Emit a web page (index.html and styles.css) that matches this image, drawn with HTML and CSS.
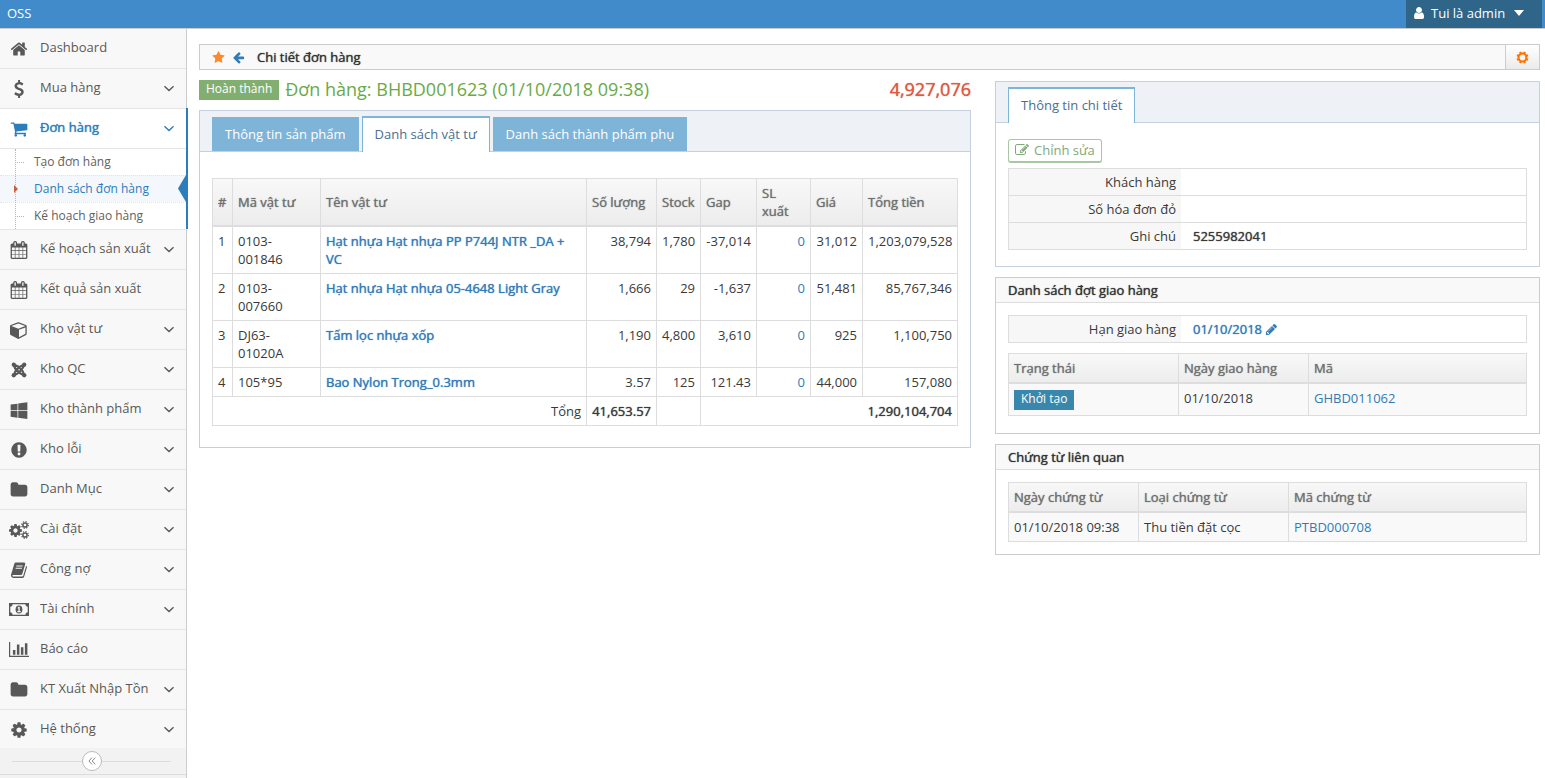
FILE: index.html
```html
<!DOCTYPE html>
<html lang="vi">
<head>
<meta charset="utf-8">
<title>OSS - Chi tiết đơn hàng</title>
<link rel="stylesheet" href="styles.css">
</head>
<body>
<svg class="sprite" aria-hidden="true">
  <symbol id="i-home" viewBox="0 0 1792 1792"><path d="M1472 992v480q0 26-19 45t-45 19h-384v-384h-256v384h-384q-26 0-45-19t-19-45v-480q0-1 .5-3t.5-3l575-474 575 474q1 2 1 6zm223-69l-62 74q-8 9-21 11h-3q-13 0-21-7l-692-577-692 577q-12 8-24 7-13-2-21-11l-62-74q-8-10-7-23.500t11-21.500l719-599q32-26 76-26t76 26l244 204v-195q0-14 9-23t23-9h192q14 0 23 9t9 23v408l219 182q10 8 11 21.500t-7 23.500z"/></symbol>
  <symbol id="i-usd" viewBox="0 0 1792 1792"><path d="M1362 1185q0 153-99.500 263.500t-258.500 136.500v175q0 14-9 23t-23 9h-135q-13 0-22.500-9.500t-9.500-22.500v-175q-66-9-127.500-31t-101.500-44.500-74-48-46.500-37.500-17.500-18q-17-21-2-41l103-135q7-10 23-12 15-2 24 9l2 2q113 99 243 125 37 8 74 8 81 0 142.500-43t61.500-122q0-28-15-53t-33.500-42-58.500-37.500-66-32-80-32.500q-39-16-61.500-25t-61.500-26.500-62.500-31-56.500-35.500-53.500-42.500-43.500-49-35.500-58-21-66.500-8.500-78q0-138 98-242t255-134v-180q0-13 9.500-22.500t22.500-9.500h135q14 0 23 9t9 23v176q57 6 110.500 23t87 33.500 63.500 37.500 39 29 15 14q17 18 5 38l-81 146q-8 15-23 16-14 3-27-7-3-3-14.500-12t-39-26.500-58.500-32-74.500-26-85.500-11.500q-95 0-155 43t-60 111q0 26 8.500 48t29.500 41.500 39.500 33 56 31 60.500 27 70 27.500q53 20 81 31.500t76 35 75.500 42.500 62 50 53 63.500 31.500 76.500 13 94z"/></symbol>
  <symbol id="i-cart" viewBox="0 0 1792 1792"><path d="M704 1536q0 52-38 90t-90 38-90-38-38-90 38-90 90-38 90 38 38 90zm896 0q0 52-38 90t-90 38-90-38-38-90 38-90 90-38 90 38 38 90zm128-1088v512q0 24-16.500 42.500t-40.500 21.500l-1044 122q13 60 13 70 0 16-24 64h920q26 0 45 19t19 45-19 45-45 19h-1024q-26 0-45-19t-19-45q0-11 8-31.500t16-36 21.500-40 15.500-29.500l-177-823h-204q-26 0-45-19t-19-45 19-45 45-19h256q16 0 28.500 6.500t19.500 15.500 13 24.500 8 26 5.500 29.500 4.500 26h1201q26 0 45 19t19 45z"/></symbol>
  <symbol id="i-calendar" viewBox="0 0 1792 1792"><path d="M192 1664h288v-288h-288v288zm352 0h320v-288h-320v288zm-352-352h288v-320h-288v320zm352 0h320v-320h-320v320zm-352-384h288v-288h-288v288zm736 736h320v-288h-320v288zm-384-736h320v-288h-320v288zm768 736h288v-288h-288v288zm-384-352h320v-320h-320v320zm-352-864v-288q0-13-9.500-22.500t-22.500-9.500h-64q-13 0-22.500 9.500t-9.500 22.500v288q0 13 9.500 22.500t22.500 9.500h64q13 0 22.500-9.500t9.500-22.500zm736 864h288v-320h-288v320zm-384-384h320v-288h-320v288zm384 0h288v-288h-288v288zm32-480v-288q0-13-9.500-22.500t-22.500-9.500h-64q-13 0-22.500 9.500t-9.500 22.500v288q0 13 9.500 22.500t22.500 9.500h64q13 0 22.500-9.500t9.500-22.500zm384-64v1280q0 52-38 90t-90 38h-1408q-52 0-90-38t-38-90v-1280q0-52 38-90t90-38h128v-96q0-66 47-113t113-47h64q66 0 113 47t47 113v96h384v-96q0-66 47-113t113-47h64q66 0 113 47t47 113v96h128q52 0 90 38t38 90z"/></symbol>
  <symbol id="i-cube" viewBox="0 0 1792 1792"><path d="M896 1629l640-349v-636l-640 233v752zm-64-865l698-254-698-254-698 254zm832-252v768q0 35-18 65t-49 47l-704 384q-28 16-61 16t-61-16l-704-384q-31-17-49-47t-18-65v-768q0-40 23-73t61-47l704-256q22-8 44-8t44 8l704 256q38 14 61 47t23 73z"/></symbol>
  <symbol id="i-joomla" viewBox="-1 -1 20 20"><g fill="none" stroke="currentColor" stroke-width="2.500"><path d="M3.500 4C4 7.500 5 7.500 9.500 12C11 13.500 12 13.500 14.500 14.500M14.500 3.500C14 7 13 7.500 8.500 12C7 13.500 6 13.500 3.500 14.500M3.500 3.500C7 4 7.500 4.500 12 9C13.800 10.800 14 12 14.500 14M14.500 3.500C11 4 10 4.800 6 9C4.200 10.800 4 12 3.500 14.500"/></g><circle cx="3.200" cy="3.200" r="2.400"/><circle cx="14.800" cy="3.200" r="2.400"/><circle cx="3.200" cy="14.800" r="2.400"/><circle cx="14.800" cy="14.800" r="2.400"/></symbol>
  <symbol id="i-windows" viewBox="0 0 1792 1792"><path d="M746 1006v651l-682-94v-557h682zm0-743v659h-682v-565zm982 743v786l-907-125v-661h907zm0-878v794h-907v-669z"/></symbol>
  <symbol id="i-alert" viewBox="0 0 1792 1792"><path d="M896 128q209 0 385.500 103t279.500 279.500 103 385.500-103 385.500-279.500 279.500-385.500 103-385.500-103-279.500-279.500-103-385.500 103-385.500 279.500-279.500 385.500-103zm128 1247v-190q0-14-9-23.500t-22-9.500h-192q-13 0-23 10t-10 23v190q0 13 10 23t23 10h192q13 0 22-9.500t9-23.500zm-2-344l18-621q0-12-10-18-10-8-24-8h-220q-14 0-24 8-10 6-10 18l17 621q0 10 10 17.500t24 7.500h185q14 0 23.500-7.500t10.500-17.500z"/></symbol>
  <symbol id="i-folder" viewBox="0 0 1792 1792"><path d="M1728 608v704q0 92-66 158t-158 66h-1216q-92 0-158-66t-66-158v-960q0-92 66-158t158-66h320q92 0 158 66t66 158v32h672q92 0 158 66t66 158z"/></symbol>
  <symbol id="i-cog" viewBox="0 0 1792 1792"><path d="M1152 896q0-106-75-181t-181-75-181 75-75 181 75 181 181 75 181-75 75-181zm512-109v222q0 12-8 23t-20 13l-185 28q-19 54-39 91 35 50 107 138 10 12 10 25t-9 23q-27 37-99 108t-94 71q-12 0-26-9l-138-108q-44 23-91 38-16 136-29 186-7 28-36 28h-222q-14 0-24.500-8.500t-11.500-21.500l-28-184q-49-16-90-37l-141 107q-10 9-25 9-14 0-25-11-126-114-165-168-7-10-7-23 0-12 8-23 15-21 51-66.500t54-70.500q-27-50-41-99l-183-27q-13-2-21-12.500t-8-23.500v-222q0-12 8-23t19-13l186-28q14-46 39-92-40-57-107-138-10-12-10-24 0-10 9-23 26-36 98.500-107.500t94.500-71.500q13 0 26 10l138 107q44-23 91-38 16-136 29-186 7-28 36-28h222q14 0 24.500 8.500t11.500 21.500l28 184q49 16 90 37l142-107q9-9 24-9 13 0 25 10 129 119 165 170 7 8 7 22 0 12-8 23-15 21-51 66.500t-54 70.500q26 50 41 98l183 28q13 2 21 12.500t8 23.500z"/></symbol>
  <symbol id="i-cogs" viewBox="0 0 20 18"><use href="#i-cog" x="-1" y="2" width="15" height="15"/><g fill="none" stroke="currentColor"><circle cx="16" cy="4" r="2.100" stroke-width="1.500"/><circle cx="16" cy="4" r="3.400" stroke-width="1.100" stroke-dasharray="1.335"/><circle cx="16" cy="14" r="2.100" stroke-width="1.500"/><circle cx="16" cy="14" r="3.400" stroke-width="1.100" stroke-dasharray="1.335"/></g></symbol>
  <symbol id="i-book" viewBox="0 0 18 18"><path fill-rule="evenodd" d="M5.800 1.500H14.200Q15.600 1.700 15.200 3.300L12.300 13Q12 14 10.900 14H2.900Q2.200 14.200 2.500 14.900Q2.800 15.500 3.700 15.500H12.200Q13 15.500 13.300 14.600L16.200 4.800Q17.200 5.300 16.900 6.400L14.200 15.500Q13.700 17 12.300 17H3.500Q1.800 17 1.100 15.300Q.8 14.400 1.100 13.600L4.300 2.800Q4.700 1.500 5.800 1.500ZM6.500 4.400L6.200 5.400H12.500L12.800 4.400ZM5.800 6.800L5.500 7.800H11.800L12.100 6.800Z"/></symbol>
  <symbol id="i-money" viewBox="0 0 20 14"><path fill-rule="evenodd" d="M0 0H20V13H0ZM3.600 1.300A2.400 2.400 0 0 1 1.300 3.800V9.200A2.400 2.400 0 0 1 3.600 11.700H16.400A2.400 2.400 0 0 1 18.700 9.200V3.800A2.400 2.400 0 0 1 16.400 1.300Z"/><ellipse cx="10" cy="6.500" rx="3.400" ry="4"/><path d="M8.600 4.800L9.700 3.800H10.700V8.100H11.700V9.200H8.400V8.100H9.400V5.300L8.900 5.700Z" fill="#f8f8f8"/></symbol>
  <symbol id="i-chart" viewBox="0 0 20 16"><path d="M0 0H1.200V13.800H20V15H0ZM3.900 8H6.400V12.800H3.900ZM7.900 2.500H10.400V12.800H7.900ZM11.900 5.300H14.400V12.800H11.900ZM15.900 1.200H18.400V12.800H15.900Z"/></symbol>
  <symbol id="i-down" viewBox="0 0 10 7"><path d="M.4 1.200L5 5.500L9.600 1.200" fill="none" stroke="currentColor" stroke-width="1.500"/></symbol>
  <symbol id="i-dleft" viewBox="0 0 8 8"><path d="M4 .6L.9 4L4 7.400M7.300 .6L4.200 4L7.300 7.400" fill="none" stroke="currentColor"/></symbol>
  <symbol id="i-star" viewBox="0 0 1792 1792"><path d="M1728 647q0 22-26 48l-363 354 86 500q1 7 1 20 0 21-10.500 35.500t-30.500 14.500q-19 0-40-12l-449-236-449 236q-22 12-40 12-21 0-31.500-14.500t-10.500-35.500q0-6 2-20l86-500-364-354q-25-27-25-48 0-37 56-46l502-73 225-455q19-41 49-41t49 41l225 455 502 73q56 9 56 46z"/></symbol>
  <symbol id="i-left" viewBox="0 0 1792 1792"><path d="M1664 896v128q0 53-32.500 90.500t-84.500 37.500h-704l293 294q38 36 38 90t-38 90l-75 76q-37 37-90 37-52 0-91-37l-651-652q-37-37-37-90 0-52 37-91l651-650q38-38 91-38 52 0 90 38l75 74q38 38 38 91t-38 91l-293 293h704q52 0 84.500 37.500t32.500 90.500z"/></symbol>
  <symbol id="i-user" viewBox="128 0 1536 1792"><path d="M1536 1399q0 109-62.500 187t-150.500 78h-854q-88 0-150.500-78t-62.500-187q0-85 8.500-160.500t31.500-152 58.500-131 94-89 134.500-34.500q131 128 313 128t313-128q76 0 134.500 34.500t94 89 58.500 131 31.500 152 8.500 160.500zm-256-887q0 159-112.500 271.500t-271.500 112.500-271.500-112.500-112.500-271.500 112.500-271.500 271.500-112.500 271.500 112.500 112.500 271.500z"/></symbol>
  <symbol id="i-gear" viewBox="0 0 14 14"><circle cx="7" cy="7" r="4.200" fill="none" stroke="currentColor" stroke-width="2.200"/><g stroke="currentColor" stroke-width="2.400"><path d="M4.500 1L5.200 2.800M9.500 1L8.800 2.800M4.500 13L5.200 11.200M9.500 13L8.800 11.200M1 4.500L2.800 5.200M1 9.500L2.800 8.800M13 4.500L11.200 5.200M13 9.500L11.200 8.800"/></g></symbol>
  <symbol id="i-pencil" viewBox="0 0 1792 1792"><path d="M491 1536l91-91-235-235-91 91v107h128v128h107zm523-928q0-22-22-22-10 0-17 7l-542 542q-7 7-7 17 0 22 22 22 10 0 17-7l542-542q7-7 7-17zm-54-192l416 416-832 832h-416v-416zm683 96q0 53-37 90l-166 166-416-416 166-165q36-38 90-38 53 0 91 38l235 234q37 39 37 91z"/></symbol>
  <symbol id="i-edit" viewBox="0 0 1792 1792"><path d="M888 1184l116-116-152-152-116 116v56h96v96h56zm440-720q-16-16-33 1l-350 350q-17 17-1 33t33-1l350-350q17-17 1-33zm80 594v190q0 119-84.500 203.500t-203.500 84.500h-832q-119 0-203.500-84.500t-84.500-203.500v-832q0-119 84.500-203.500t203.500-84.500h832q63 0 117 25 15 7 18 23 3 17-9 29l-49 49q-14 14-32 8-23-6-45-6h-832q-66 0-113 47t-47 113v832q0 66 47 113t113 47h832q66 0 113-47t47-113v-126q0-13 9-22l64-64q15-15 35-7t20 29zm-96-738l288 288-672 672h-288v-288zm444 132l-92 92-288-288 92-92q28-28 68-28t68 28l152 152q28 28 28 68t-28 68z"/></symbol>
</svg>

<header class="navbar">
  <a class="brand" href="#">OSS</a>
  <button class="user-menu" type="button"><svg class="icon-user"><use href="#i-user"/></svg><span>Tui là admin</span><i class="caret"></i></button>
</header>

<div class="shell">
  <nav class="sidebar">
    <ul class="menu">
      <li><a class="menu-link" href="#"><svg class="menu-icon"><use href="#i-home"/></svg><span>Dashboard</span></a></li>
      <li><a class="menu-link" href="#"><svg class="menu-icon"><use href="#i-usd"/></svg><span>Mua hàng</span><svg class="chev"><use href="#i-down"/></svg></a></li>
      <li class="open"><a class="menu-link" href="#"><svg class="menu-icon"><use href="#i-cart"/></svg><span class="strong">Đơn hàng</span><svg class="chev"><use href="#i-down"/></svg></a>
        <ul class="submenu">
          <li><a href="#">Tạo đơn hàng</a></li>
          <li class="current"><a href="#">Danh sách đơn hàng</a></li>
          <li><a href="#">Kế hoạch giao hàng</a></li>
        </ul>
      </li>
      <li><a class="menu-link" href="#"><svg class="menu-icon"><use href="#i-calendar"/></svg><span>Kế hoạch sản xuất</span><svg class="chev"><use href="#i-down"/></svg></a></li>
      <li><a class="menu-link" href="#"><svg class="menu-icon"><use href="#i-calendar"/></svg><span>Kết quả sản xuất</span></a></li>
      <li><a class="menu-link" href="#"><svg class="menu-icon"><use href="#i-cube"/></svg><span>Kho vật tư</span><svg class="chev"><use href="#i-down"/></svg></a></li>
      <li><a class="menu-link" href="#"><svg class="menu-icon"><use href="#i-joomla"/></svg><span>Kho QC</span><svg class="chev"><use href="#i-down"/></svg></a></li>
      <li><a class="menu-link" href="#"><svg class="menu-icon"><use href="#i-windows"/></svg><span>Kho thành phẩm</span><svg class="chev"><use href="#i-down"/></svg></a></li>
      <li><a class="menu-link" href="#"><svg class="menu-icon"><use href="#i-alert"/></svg><span>Kho lỗi</span><svg class="chev"><use href="#i-down"/></svg></a></li>
      <li><a class="menu-link" href="#"><svg class="menu-icon"><use href="#i-folder"/></svg><span>Danh Mục</span><svg class="chev"><use href="#i-down"/></svg></a></li>
      <li><a class="menu-link" href="#"><svg class="menu-icon"><use href="#i-cogs"/></svg><span>Cài đặt</span><svg class="chev"><use href="#i-down"/></svg></a></li>
      <li><a class="menu-link" href="#"><svg class="menu-icon"><use href="#i-book"/></svg><span>Công nợ</span><svg class="chev"><use href="#i-down"/></svg></a></li>
      <li><a class="menu-link" href="#"><svg class="menu-icon"><use href="#i-money"/></svg><span>Tài chính</span><svg class="chev"><use href="#i-down"/></svg></a></li>
      <li><a class="menu-link" href="#"><svg class="menu-icon"><use href="#i-chart"/></svg><span>Báo cáo</span></a></li>
      <li><a class="menu-link" href="#"><svg class="menu-icon"><use href="#i-folder"/></svg><span>KT Xuất Nhập Tồn</span><svg class="chev"><use href="#i-down"/></svg></a></li>
      <li><a class="menu-link" href="#"><svg class="menu-icon"><use href="#i-cog"/></svg><span>Hệ thống</span><svg class="chev"><use href="#i-down"/></svg></a></li>
    </ul>
    <div class="collapse"><button class="collapse-btn" type="button" aria-label="Thu gọn"><svg><use href="#i-dleft"/></svg></button></div>
  </nav>

  <main class="main">
    <div class="titlebar">
      <svg class="icon-star"><use href="#i-star"/></svg>
      <a class="back" href="#" aria-label="Quay lại"><svg><use href="#i-left"/></svg></a>
      <h1 class="strong">Chi tiết đơn hàng</h1>
      <button class="gear" type="button" aria-label="Cài đặt"><svg><use href="#i-gear"/></svg></button>
    </div>

    <div class="columns">
      <section class="order">
        <div class="order-head">
          <span class="badge badge-green">Hoàn thành</span>
          <h2>Đơn hàng: BHBD001623 (01/10/2018 09:38)</h2>
          <strong class="total strong">4,927,076</strong>
        </div>
        <div class="tabbox">
          <div class="tabs" role="tablist">
            <button class="tab" type="button" role="tab">Thông tin sản phẩm</button>
            <button class="tab active" type="button" role="tab" aria-selected="true">Danh sách vật tư</button>
            <button class="tab" type="button" role="tab">Danh sách thành phẩm phụ</button>
          </div>
          <div class="pane pane-items">
            <table class="grid items">
              <colgroup><col class="w-no"><col class="w-code"><col><col class="w-qty"><col class="w-stock"><col class="w-gap"><col class="w-out"><col class="w-price"><col class="w-sum"></colgroup>
              <thead><tr><th>#</th><th>Mã vật tư</th><th>Tên vật tư</th><th>Số lượng</th><th>Stock</th><th>Gap</th><th>SL xuất</th><th>Giá</th><th>Tổng tiền</th></tr></thead>
              <tbody>
                <tr><td>1</td><td>0103-001846</td><td><a class="strong" href="#">Hạt nhựa Hạt nhựa PP P744J NTR _DA + VC</a></td><td class="num">38,794</td><td class="num">1,780</td><td class="num">-37,014</td><td class="num"><a href="#">0</a></td><td class="num">31,012</td><td class="num">1,203,079,528</td></tr>
                <tr><td>2</td><td>0103-007660</td><td><a class="strong" href="#">Hạt nhựa Hạt nhựa 05-4648 Light Gray</a></td><td class="num">1,666</td><td class="num">29</td><td class="num">-1,637</td><td class="num"><a href="#">0</a></td><td class="num">51,481</td><td class="num">85,767,346</td></tr>
                <tr><td>3</td><td>DJ63-01020A</td><td><a class="strong" href="#">Tấm lọc nhựa xốp</a></td><td class="num">1,190</td><td class="num">4,800</td><td class="num">3,610</td><td class="num"><a href="#">0</a></td><td class="num">925</td><td class="num">1,100,750</td></tr>
                <tr><td>4</td><td>105*95</td><td><a class="strong" href="#">Bao Nylon Trong_0.3mm</a></td><td class="num">3.57</td><td class="num">125</td><td class="num">121.43</td><td class="num"><a href="#">0</a></td><td class="num">44,000</td><td class="num">157,080</td></tr>
              </tbody>
              <tfoot><tr><td class="num" colspan="3">Tổng</td><td class="num strong">41,653.57</td><td></td><td class="num strong" colspan="4">1,290,104,704</td></tr></tfoot>
            </table>
          </div>
        </div>
      </section>

      <aside class="side">
        <div class="tabbox">
          <div class="tabs" role="tablist"><button class="tab active" type="button" role="tab" aria-selected="true">Thông tin chi tiết</button></div>
          <div class="pane pane-info">
            <button class="edit" type="button"><svg><use href="#i-edit"/></svg><span>Chỉnh sửa</span></button>
            <dl class="info">
              <div><dt>Khách hàng</dt><dd></dd></div>
              <div><dt>Số hóa đơn đỏ</dt><dd></dd></div>
              <div><dt>Ghi chú</dt><dd class="strong">5255982041</dd></div>
            </dl>
          </div>
        </div>

        <section class="widget widget-delivery">
          <h3 class="strong">Danh sách đợt giao hàng</h3>
          <div class="widget-body">
            <dl class="info">
              <div><dt>Hạn giao hàng</dt><dd><a class="due" href="#"><span class="strong">01/10/2018</span><svg><use href="#i-pencil"/></svg></a></dd></div>
            </dl>
            <table class="grid striped">
              <colgroup><col class="w-status"><col class="w-date"><col></colgroup>
              <thead><tr><th>Trạng thái</th><th>Ngày giao hàng</th><th>Mã</th></tr></thead>
              <tbody><tr><td><span class="badge badge-blue">Khởi tạo</span></td><td>01/10/2018</td><td><a href="#">GHBD011062</a></td></tr></tbody>
            </table>
          </div>
        </section>

        <section class="widget">
          <h3 class="strong">Chứng từ liên quan</h3>
          <div class="widget-body">
            <table class="grid striped">
              <colgroup><col class="w-date"><col class="w-kind"><col></colgroup>
              <thead><tr><th>Ngày chứng từ</th><th>Loại chứng từ</th><th>Mã chứng từ</th></tr></thead>
              <tbody><tr><td>01/10/2018 09:38</td><td>Thu tiền đặt cọc</td><td><a href="#">PTBD000708</a></td></tr></tbody>
            </table>
          </div>
        </section>
      </aside>
    </div>
  </main>
</div>
</body>
</html>
```
FILE: styles.css
```css
* { box-sizing: border-box; }
body {
  margin: 0;
  min-height: 100vh;
  display: flex;
  flex-direction: column;
  background: #fff;
  color: #393939;
  font: 13px/18px "Open Sans", sans-serif;
}
button { font: inherit; color: inherit; margin: 0; padding: 0; border: 0; background: none; cursor: pointer; }
a { color: #337ab7; text-decoration: none; }
ul, dl, dd, h1, h2, h3 { margin: 0; padding: 0; list-style: none; font-size: 13px; font-weight: 400; }
svg { display: block; fill: currentColor; }
.sprite { position: absolute; width: 0; height: 0; }
.strong, th { font-weight: 400; text-shadow: 0 0 1px currentColor; }

/* Top bar */
.navbar {
  display: flex;
  justify-content: space-between;
  height: 29px;
  padding: 0 3px 0 7px;
  background: #428bca;
  border-bottom: 1px solid #ccc;
}
.brand { color: #fff; line-height: 26px; }
.user-menu { display: flex; align-items: center; width: 136px; padding: 0 7px 2px; background: #2e6589; color: #fff; }
.icon-user { width: 12px; height: 14px; margin-right: 6px; }
.caret { margin-left: 9px; border: 5px solid transparent; border-top: 6px solid #fff; border-bottom: 0; }

/* Sidebar */
.shell { display: flex; flex: 1; }
.sidebar { width: 187px; flex: none; background: #f2f2f2; border-right: 1px solid #ccc; }
.menu > li { position: relative; background: #f8f8f8; border-bottom: 1px solid #e5e5e5; }
.menu > li:last-child { border-bottom: 0; }
.menu-link { display: flex; align-items: center; height: 39px; padding: 0 12px 4px 9px; color: #585858; }
.menu > li:last-child .menu-link { height: 38px; padding-bottom: 3px; }
.menu-link span { flex: 1; }
.menu-icon { width: 20px; height: 18px; margin: 4px 11px 0 0; }
.chev { width: 10px; height: 7px; margin-top: 3px; }
.menu > .open { background: #fff; }
.open > .menu-link, .submenu .current a { color: #2b7dbc; }
.open::after { content: ""; position: absolute; top: -1px; right: -2px; bottom: 0; width: 2px; background: #2b7dbc; }
.submenu { position: relative; border-top: 1px solid #e5e5e5; }
.submenu::before { content: ""; position: absolute; z-index: 1; top: 0; bottom: 0; left: 15px; border-left: 1px dotted #9dbdd6; }
.submenu li { position: relative; }
.submenu li + li { border-top: 1px dotted #e4e4e4; }
.submenu a { display: block; padding: 4px 0 4px 34px; color: #616161; font-size: 12px; }
.submenu li::before { content: ""; position: absolute; top: 13px; left: 17px; width: 7px; border-top: 1px dotted #9dbdd6; }
.submenu .current { background: #f4f7fb; }
.submenu .current::before { z-index: 2; top: 8px; left: 12px; width: 8px; height: 10px; border: 0; background: #c86139; clip-path: polygon(2px 1px, 6px 5px, 2px 9px); }
.submenu .current::after { content: ""; position: absolute; top: -1px; right: 0; width: 8px; height: 27px; background: #2b7dbc; clip-path: polygon(100% 0, 0 50%, 100% 100%); }
.collapse {
  display: flex;
  justify-content: center;
  height: 27px;
  padding: 3px 2px 0 0;
  border-bottom: 1px solid #ddd;
  background: linear-gradient(#ddd, #ddd) no-repeat 12px 13px / 159px 1px;
}
.collapse-btn { display: grid; place-items: center; width: 20px; height: 20px; border: 1px solid #bbb; border-radius: 50%; background: #fff; color: #888; }
.collapse-btn svg { width: 8px; height: 8px; }

/* Main */
.main { flex: 1; min-width: 0; padding: 15px 5px 20px 12px; }
.titlebar { display: flex; align-items: center; height: 26px; padding-left: 12px; background: #f9f9f9; border: 1px solid #ccc; }
.icon-star { width: 13px; height: 13px; color: #ff892a; }
.back svg { width: 13px; height: 13px; margin: 0 12px 0 7px; color: #337ab7; }
.titlebar h1 { flex: 1; color: #333; }
.gear { display: grid; place-items: center; width: 34px; height: 24px; border-left: 1px solid #ccc; background: linear-gradient(#fff, #ebebeb); color: #ff7200; }
.gear svg { width: 13px; height: 13px; }

.columns { display: grid; grid-template-columns: minmax(0, 772fr) minmax(0, 545fr); gap: 24px; align-items: start; }
.order { padding-top: 10px; }
.side { display: grid; gap: 10px; padding-top: 11px; }
.order-head { display: flex; gap: 6px; height: 30px; }
.order-head h2 { flex: 1; color: #69aa46; font-size: 18px; line-height: 18px; }
.total { color: #dd5a43; font-size: 18px; line-height: 18px; }
.badge { display: inline-block; height: 20px; padding: 0 7px; color: #fff; font-size: 12px; line-height: 18px; }
.badge-green { background: #82af6f; }
.badge-blue { display: block; width: max-content; margin: 1px 0 0; background: #3a87ad; }

/* Tabs */
.tabbox { border: 1px solid #c5d0dc; background: #fff; }
.tabs { display: flex; align-items: flex-end; gap: 3px; height: 41px; padding: 0 12px; background: #eef2f7; box-shadow: inset 0 -1px #c5d0dc; }
.tab { height: 34px; margin-bottom: 1px; padding: 0 13px; background: #7db4d8; color: #fff; }
.tab.active { height: 36px; margin-bottom: 0; padding: 0 12px 2px; border: 1px solid #7db4d8; border-top-width: 2px; border-bottom: 0; background: #fff; color: #4c6e8d; }
.pane-items { padding: 26px 12px 21px; }
.pane-info { padding: 16px 12px; }

/* Tables */
.grid { width: 100%; table-layout: fixed; border-collapse: collapse; }
.grid th, .grid td { padding: 5px; border: 1px solid #ddd; text-align: left; vertical-align: top; }
.grid th { border-bottom-width: 2px; color: #707070; vertical-align: middle; }
.grid thead tr { background: linear-gradient(#f8f8f8, #ececec); }
.grid .num { text-align: right; }
.striped td { background: #f9f9f9; }
.w-no { width: 20px; }
.w-code { width: 88px; }
.w-qty { width: 70px; }
.w-stock { width: 44px; }
.w-gap { width: 56px; }
.w-out { width: 54px; }
.w-price { width: 52px; }
.w-sum { width: 95px; }
.w-status { width: 170px; }
.w-date { width: 130px; }
.w-kind { width: 150px; }

/* Label and value list */
.info { border: 1px solid #ddd; }
.info > div { display: flex; min-height: 26px; }
.info > div + div { border-top: 1px solid #ddd; }
.info dt { width: 172px; padding: 4px 5px 4px 0; background: #f7f7f7; text-align: right; }
.info dd { padding: 4px 12px; }
.edit { display: flex; align-items: center; gap: 5px; height: 24px; margin-bottom: 5px; padding: 0 6px 1px; border: 1px solid #a7c9a1; border-bottom-width: 2px; border-radius: 3px; color: #81a87b; }
.edit svg { width: 14px; height: 14px; }
.due { display: flex; align-items: center; gap: 3px; }
.due svg { width: 13px; height: 13px; }

/* Widgets */
.widget { border: 1px solid #ccc; background: #fff; }
.widget h3 { height: 25px; padding: 3px 12px; border-bottom: 1px solid #ddd; background: #f9f9f9; color: #333; }
.widget-body { padding: 12px; }
.widget .info { min-height: 28px; margin-bottom: 10px; }
.widget-delivery .widget-body { padding-bottom: 17px; }
```
